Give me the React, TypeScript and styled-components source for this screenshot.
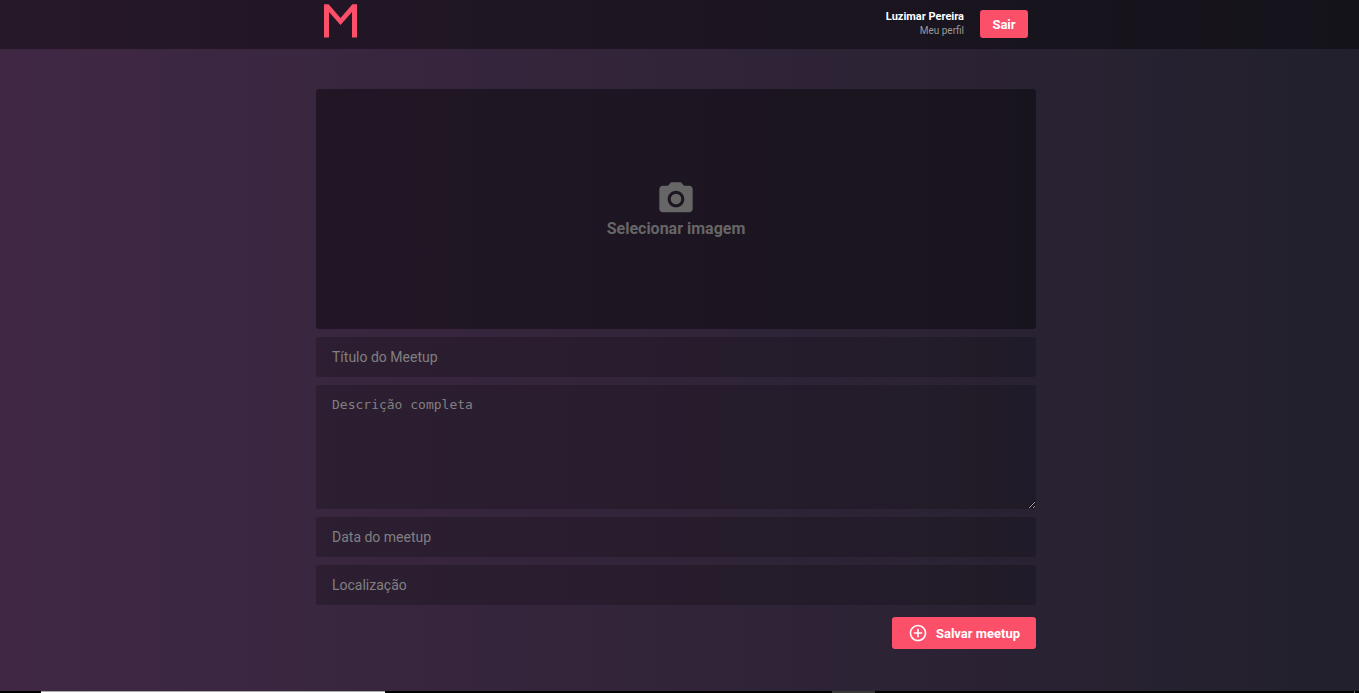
import React from 'react';
import styled, { createGlobalStyle } from 'styled-components';
import { MdCameraAlt, MdAddCircleOutline } from 'react-icons/md';

const GlobalStyle = createGlobalStyle`
  * { box-sizing: border-box; margin: 0; padding: 0; }
  body {
    font-family: Roboto, "Liberation Sans", sans-serif;
    font-size: 14px;
    -webkit-font-smoothing: antialiased;
  }
  button { cursor: pointer; }
`;

const Page = styled.div`
  display: flex;
  flex-direction: column;
  min-height: 100vh;
  background: linear-gradient(90deg, #402845, #22202c);
`;

const Header = styled.header`
  padding: 0 7px 1px 0;
  background: rgba(0, 0, 0, 0.4);
`;

const HeaderContent = styled.div`
  display: flex;
  align-items: center;
  justify-content: space-between;
  max-width: 720px;
  height: 48px;
  margin: 0 auto;
  padding: 0 8px;
`;

const LogoLink = styled.a`
  display: block;
  align-self: flex-start;
  padding-top: 4px;
  svg { display: block; }
`;

const Account = styled.div`
  display: flex;
  align-items: center;
  gap: 16px;
`;

const Profile = styled.div`
  display: flex;
  flex-direction: column;
  align-items: flex-end;
`;

const UserName = styled.strong`
  font-size: 11px;
  line-height: 14px;
  color: #fff;
`;

const ProfileLink = styled.a`
  font-size: 10px;
  line-height: 14px;
  color: #999;
  text-decoration: none;
`;

const Button = styled.button`
  display: flex;
  align-items: center;
  justify-content: center;
  gap: 8px;
  border: 0;
  border-radius: 3px;
  background: #fc4f6a;
  color: #fff;
  font-family: inherit;
  font-size: 13px;
  font-weight: 700;
`;

const LogoutButton = styled(Button)`
  width: 48px;
  height: 28px;
`;

const SaveButton = styled(Button)`
  align-self: flex-end;
  width: 144px;
  height: 32px;
  margin-top: 4px;
`;

const Main = styled.main`
  flex: 1;
  padding: 40px 7px 40px 0;
`;

const Form = styled.form`
  display: flex;
  flex-direction: column;
  gap: 8px;
  max-width: 720px;
  margin: 0 auto;
`;

const ImagePicker = styled.button`
  display: flex;
  flex-direction: column;
  align-items: center;
  justify-content: center;
  height: 240px;
  border: 0;
  border-radius: 3px;
  background: rgba(0, 0, 0, 0.4);
  color: #666;
  font-family: inherit;
  font-size: 16px;
  font-weight: 700;
  line-height: 20px;
`;

const TextField = styled.input`
  width: 100%;
  height: 40px;
  padding: 0 16px;
  border: 0;
  border-radius: 3px;
  background: rgba(0, 0, 0, 0.2);
  color: #fff;
  font-family: inherit;
  font-size: 14px;
  &::placeholder { color: #808080; }
`;

const Description = styled.textarea`
  display: block;
  width: 100%;
  height: 124px;
  padding: 12px 16px;
  border: 0;
  border-radius: 3px;
  background: rgba(0, 0, 0, 0.2);
  color: #fff;
  font-family: "DejaVu Sans Mono", monospace;
  font-size: 13px;
  resize: vertical;
  &::placeholder { color: #808080; }
`;

const BottomBar = styled.div`
  display: flex;
  height: 2px;
  background: #000;
`;

const BarSegment = styled.div<{ $start: number; $width: number; $color: string }>`
  width: ${(p) => p.$width}px;
  margin-left: ${(p) => p.$start}px;
  background: ${(p) => p.$color};
`;

const BarEnd = styled.div`
  width: 5px;
  margin-left: auto;
  border-left: 1px solid #666;
`;

export default function App() {
  return (
    <>
      <GlobalStyle />
      <Page>
        <Header>
          <HeaderContent>
            <LogoLink href="#" aria-label="Meetapp">
              <svg width="33" height="34" viewBox="0 0 33 34" fill="#fc4f6a">
                <path d="M0 0.3H4.6L16.5 14L28.4 0.3H33V33.6H28V8L16.5 21L5 8V33.6H0Z" />
              </svg>
            </LogoLink>
            <Account>
              <Profile>
                <UserName>Luzimar Pereira</UserName>
                <ProfileLink href="#">Meu perfil</ProfileLink>
              </Profile>
              <LogoutButton type="button">Sair</LogoutButton>
            </Account>
          </HeaderContent>
        </Header>
        <Main>
          <Form>
            <ImagePicker type="button">
              <MdCameraAlt size={40} />
              Selecionar imagem
            </ImagePicker>
            <TextField aria-label="Título do Meetup" placeholder="Título do Meetup" />
            <Description aria-label="Descrição completa" placeholder="Descrição completa" />
            <TextField aria-label="Data do meetup" placeholder="Data do meetup" />
            <TextField aria-label="Localização" placeholder="Localização" />
            <SaveButton type="button">
              <MdAddCircleOutline size={20} />
              Salvar meetup
            </SaveButton>
          </Form>
        </Main>
        <BottomBar>
          <BarSegment $start={41} $width={344} $color="linear-gradient(#aaa 50%, #fff 50%)" />
          <BarSegment $start={447} $width={43} $color="#383838" />
          <BarEnd />
        </BottomBar>
      </Page>
    </>
  );
}
